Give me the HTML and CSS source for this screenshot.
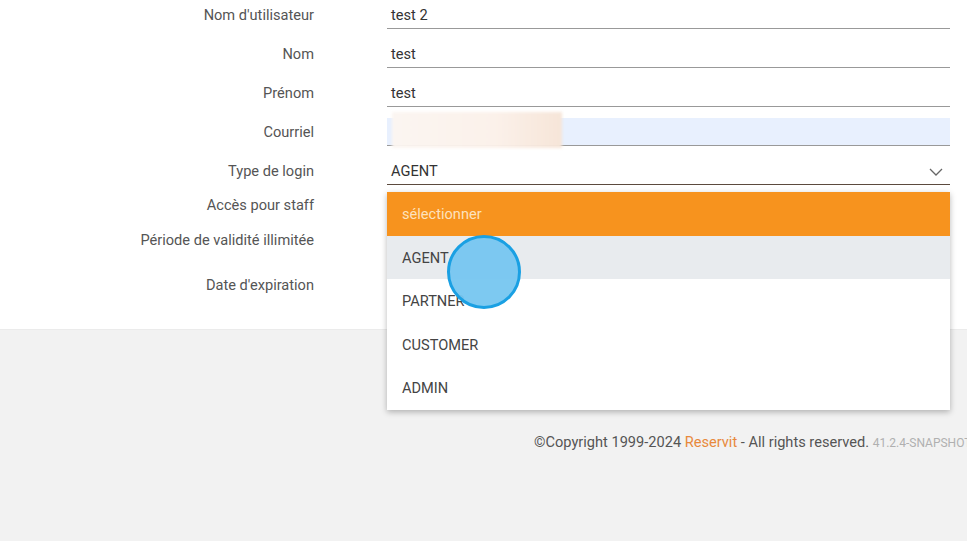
FILE: index.html
```html
<!DOCTYPE html>
<html lang="fr">
<head>
<meta charset="utf-8">
<title>Utilisateur</title>
<link rel="stylesheet" href="styles.css">
</head>
<body>
<main class="panel">
  <form class="form">
    <div class="row">
      <label class="label">Nom d'utilisateur</label>
      <div class="field"><span class="value">test 2</span></div>
    </div>
    <div class="row">
      <label class="label">Nom</label>
      <div class="field"><span class="value">test</span></div>
    </div>
    <div class="row">
      <label class="label">Prénom</label>
      <div class="field"><span class="value">test</span></div>
    </div>
    <div class="row">
      <label class="label">Courriel</label>
      <div class="field field-autofill"><span class="redacted"></span></div>
    </div>
    <div class="row">
      <label class="label">Type de login</label>
      <div class="field field-select">
        <span class="value">AGENT</span>
        <svg class="chevron" width="14" height="8" viewBox="0 0 14 8"><path d="M1 1l6 6 6-6" fill="none" stroke="#666" stroke-width="1.3"/></svg>
        <ul class="menu">
          <li class="opt opt-placeholder">sélectionner</li>
          <li class="opt opt-hover">AGENT</li>
          <li class="opt">PARTNER</li>
          <li class="opt">CUSTOMER</li>
          <li class="opt">ADMIN</li>
        </ul>
        <span class="touch"></span>
      </div>
    </div>
    <div class="row row-staff">
      <label class="label">Accès pour staff</label>
    </div>
    <div class="row row-validity">
      <label class="label">Période de validité illimitée</label>
    </div>
    <div class="row row-expiry">
      <label class="label">Date d'expiration</label>
    </div>
  </form>
</main>
<footer class="footer">
  <p class="copy">©Copyright 1999-2024 <span class="brand">Reservit</span> - All rights reserved. <span class="version">41.2.4-SNAPSHOT</span></p>
</footer>
</body>
</html>
```
FILE: styles.css
```css
html, body {
  margin: 0;
  padding: 0;
}
body {
  background: #f2f2f2;
  font-family: Roboto, "Liberation Sans", sans-serif;
  font-size: 14.6px;
  color: #444;
  height: 541px;
  overflow: hidden;
}
.panel {
  background: #fff;
  height: 329px;
  border-bottom: 1px solid #ebebeb;
}
.form {
  margin: 0;
  display: flex;
  flex-direction: column;
}
.row {
  display: grid;
  grid-template-columns: 314px 563px;
  column-gap: 73px;
  margin-bottom: 10px;
}
.label {
  text-align: right;
  color: #555;
  line-height: 30px;
  height: 29px;
}
.field {
  position: relative;
  height: 28px;
  border-bottom: 1px solid #999;
  padding-left: 4px;
}
.value {
  display: block;
  color: #333;
  line-height: 30px;
  height: 28px;
}
.field-autofill {
  background: #e8f0fe;
  height: 27px;
  margin-top: 1px;
}
.redacted {
  position: absolute;
  left: 5px;
  top: -6px;
  width: 170px;
  height: 36px;
  background: linear-gradient(90deg, #fbf5f1 0%, #fbf1ea 60%, #f6e5d8 100%);
  filter: blur(1.5px);
}
.field-select {
  border-bottom-color: #5c4a3e;
}
.chevron {
  position: absolute;
  right: 7px;
  top: 12px;
}
.menu {
  position: absolute;
  top: 36px;
  left: 0;
  width: 563px;
  margin: 0;
  padding: 0;
  list-style: none;
  background: #fff;
  box-shadow: 0 2px 6px rgba(0,0,0,0.28);
  z-index: 2;
}
.opt {
  height: 43.6px;
  line-height: 44px;
  padding-left: 15px;
  color: #444;
}
.opt-placeholder {
  background: #f7931e;
  color: #fde2bd;
}
.opt-hover {
  background: #e8ebee;
}
.touch {
  position: absolute;
  left: 60px;
  top: 79px;
  width: 68px;
  height: 68px;
  border-radius: 50%;
  border: 3px solid #1aa0e3;
  background: rgba(118, 198, 240, 0.95);
  z-index: 3;
}
.row-staff .label,
.row-validity .label,
.row-expiry .label {
  line-height: 20px;
  height: 20px;
}
.row-staff {
  height: 35px;
  margin-bottom: 0;
}
.row-validity {
  height: 45px;
  margin-bottom: 0;
}
.row-expiry {
  height: 35px;
  margin-bottom: 0;
}
.footer {
  padding-top: 102px;
}
.copy {
  margin: 0;
  padding-left: 534px;
  white-space: nowrap;
  overflow: hidden;
  color: #555;
  line-height: 20px;
}
.brand {
  color: #e8893c;
}
.version {
  font-size: 12px;
  color: #b0b0b0;
}
```
